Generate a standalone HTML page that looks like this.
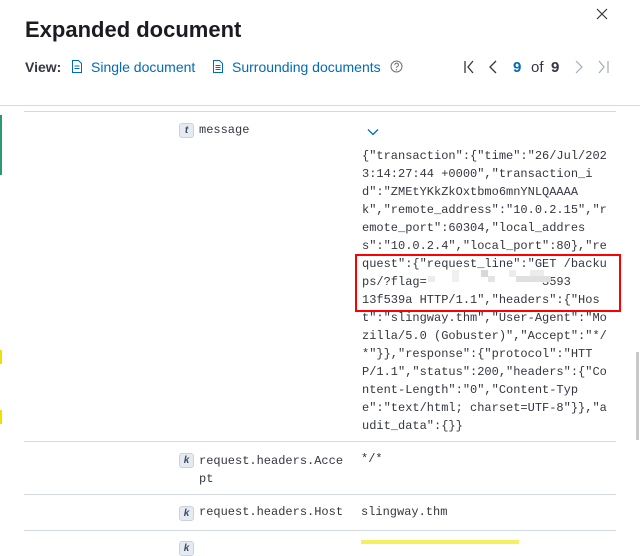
<!DOCTYPE html>
<html><head><style>
body{margin:0;width:640px;height:544px;overflow:hidden;background:#fff;font-family:"Liberation Sans",sans-serif;position:relative;color:#343741}
.a{position:absolute}
.mono{font-family:"Liberation Mono",monospace;font-size:12px;color:#343741}
.json{left:362px;top:147px;line-height:18px;white-space:pre}
.sep{position:absolute;left:24px;width:592px;height:1px;background:#d3dae6}
.ic{position:absolute;width:13px;height:13px;border:1px solid #c8d2e0;background:#e6ebf2;border-radius:3px;font:italic bold 10px "Liberation Sans",sans-serif;color:#3c4a66;text-align:center;line-height:13px}
.link{color:#006bb8;font-size:14px}
</style></head><body>
<div class="a" style="left:0;top:115px;width:2px;height:60px;background:#2c9a6e"></div>
<div class="a" style="left:0;top:350px;width:2px;height:14px;background:#f0e000"></div>
<div class="a" style="left:0;top:410px;width:2px;height:14px;background:#f0e000"></div>
<div class="a" style="left:636px;top:352px;width:3px;height:88px;background:#c8c8c8"></div>
<div class="a" style="left:25px;top:17px;font-size:22px;font-weight:bold;color:#1a1c21">Expanded document</div>
<svg class="a" style="left:596px;top:8px" width="12" height="12"><path d="M1 1L11 11M11 1L1 11" stroke="#343741" stroke-width="1.2"/></svg>
<div class="a" style="left:25px;top:59px;font-size:14px;font-weight:bold;color:#343741">View:</div>
<svg class="a" style="left:71px;top:60px" width="12" height="13"><path d="M1.5 .5h6l3 3v9h-9z M3.5 6h5M3.5 8.5h5" fill="none" stroke="#006bb8"/></svg>
<div class="a link" style="left:91px;top:59px">Single document</div>
<svg class="a" style="left:212px;top:60px" width="12" height="13"><path d="M1.5 .5h6l3 3v9h-9z M3.5 5.5h5M3.5 7.5h5M3.5 9.5h5" fill="none" stroke="#006bb8"/></svg>
<div class="a link" style="left:232px;top:59px">Surrounding documents</div>
<svg class="a" style="left:390px;top:60px" width="13" height="13"><circle cx="6.5" cy="6.5" r="5.5" fill="none" stroke="#69707d"/><path d="M4.8 5a1.8 1.8 0 1 1 2.5 1.6c-.6.3-.8.6-.8 1.3" fill="none" stroke="#69707d"/><circle cx="6.5" cy="9.8" r=".7" fill="#69707d"/></svg>
<svg class="a" style="left:463px;top:60px" width="150" height="14"><path d="M2 1v12M10 1L5 7l5 6" fill="none" stroke="#343741" stroke-width="1.3"/><path d="M33 1L27 7l6 6" fill="none" stroke="#343741" stroke-width="1.3"/><path d="M113 1l6 6-6 6" fill="none" stroke="#a2abba" stroke-width="1.2"/><path d="M136 1l5 6-5 6M145 1v12" fill="none" stroke="#a2abba" stroke-width="1.2"/></svg>
<div class="a" style="left:513px;top:59px;font-size:15px;font-weight:bold;color:#006bb8">9</div>
<div class="a" style="left:531px;top:59px;font-size:15px;color:#343741">of</div>
<div class="a" style="left:551px;top:59px;font-size:15px;font-weight:bold;color:#343741">9</div>
<div class="a" style="left:0;top:105px;width:640px;height:1px;background:#d3dae6"></div>
<div class="sep" style="top:111px"></div>
<div class="ic" style="left:179px;top:123px">t</div>
<div class="a mono" style="left:199px;top:123px">message</div>
<svg class="a" style="left:367px;top:128px" width="12" height="8"><path d="M1 1.5l5 5 5-5" fill="none" stroke="#006bb8" stroke-width="1.3"/></svg>
<div class="a mono json">{"transaction":{"time":"26/Jul/202
3:14:27:44 +0000","transaction_i
d":"ZMEtYKkZkOxtbmo6mnYNLQAAAA
k","remote_address":"10.0.2.15","r
emote_port":60304,"local_addres
s":"10.0.2.4","local_port":80},"re
quest":{"request_line":"GET /backu
ps/?flag=                3593
13f539a HTTP/1.1","headers":{"Hos
t":"slingway.thm","User-Agent":"Mo
zilla/5.0 (Gobuster)","Accept":"*/
*"}},"response":{"protocol":"HTT
P/1.1","status":200,"headers":{"Co
ntent-Length":"0","Content-Typ
e":"text/html; charset=UTF-8"}},"a
udit_data":{}}</div>
<div class="a" style="left:428px;top:276px;width:7px;height:6px;background:#ececec"></div>
<div class="a" style="left:452px;top:270px;width:7px;height:12px;background:#f0f0f0"></div>
<div class="a" style="left:481px;top:270px;width:7px;height:7px;background:#d8d8d8"></div>
<div class="a" style="left:488px;top:276px;width:7px;height:6px;background:#e4e4e4"></div>
<div class="a" style="left:509px;top:270px;width:7px;height:7px;background:#ececec"></div>
<div class="a" style="left:516px;top:276px;width:35px;height:6px;background:#e0e0e0"></div>
<div class="a" style="left:530px;top:270px;width:14px;height:6px;background:#ececec"></div>
<div class="a" style="left:355px;top:254px;width:262px;height:54px;border:2px solid #f00"></div>
<div class="sep" style="top:441px"></div>
<div class="ic" style="left:179px;top:453px">k</div>
<div class="a mono" style="left:199px;top:452px;line-height:18px">request.headers.Acce<br>pt</div>
<div class="a mono" style="left:361px;top:452px">*/*</div>
<div class="sep" style="top:494px"></div>
<div class="ic" style="left:179px;top:506px">k</div>
<div class="a mono" style="left:199px;top:505px">request.headers.Host</div>
<div class="a mono" style="left:361px;top:505px">slingway.thm</div>
<div class="sep" style="top:530px"></div>
<div class="a" style="left:361px;top:540px;width:158px;height:4px;background:#f5f060"></div>
<div class="ic" style="left:179px;top:541px">k</div>
</body></html>
